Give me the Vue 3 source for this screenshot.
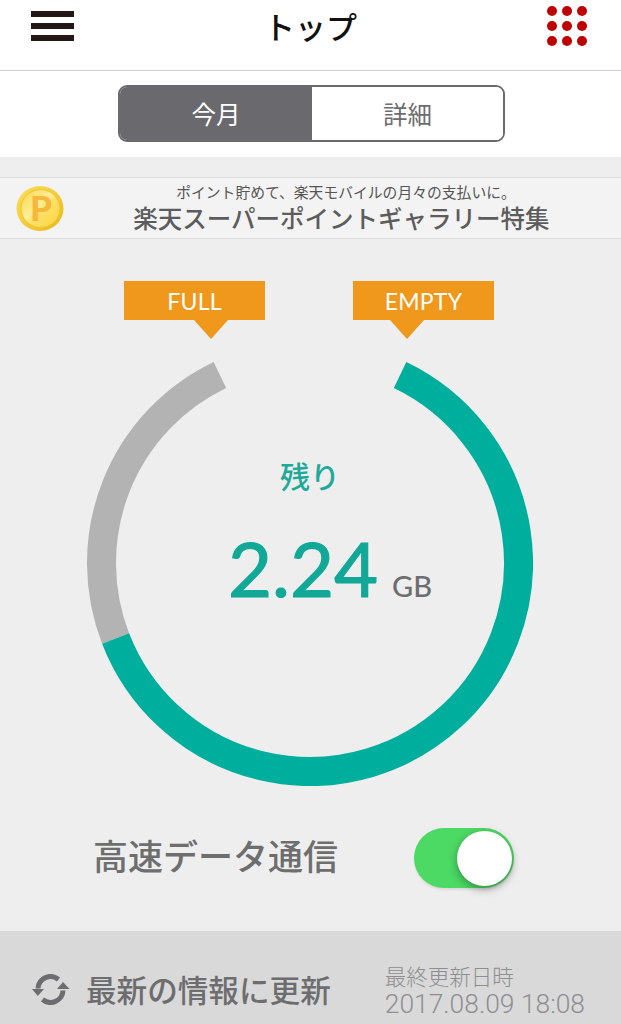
<template>
  <div class="page">
    <header class="top-bar">
      <button class="icon-btn" aria-label="menu">
        <span class="burger"></span>
        <span class="burger"></span>
        <span class="burger"></span>
      </button>
      <h1 class="title">トップ</h1>
      <div class="dots">
        <span v-for="n in 9" :key="n" class="dot"></span>
      </div>
    </header>

    <div class="tabs-row">
      <div class="tabs">
        <div class="tab active">今月</div>
        <div class="tab">詳細</div>
      </div>
    </div>

    <main class="content">
      <div class="banner">
        <svg class="coin" width="48" height="48" viewBox="0 0 48 48">
          <defs>
            <linearGradient id="coinEdge" x1="0" y1="0" x2="1" y2="1">
              <stop offset="0" stop-color="#fbe05a" />
              <stop offset="1" stop-color="#ecb61c" />
            </linearGradient>
            <linearGradient id="coinFace" x1="0" y1="0" x2="1" y2="1">
              <stop offset="0" stop-color="#fbd84a" />
              <stop offset="0.45" stop-color="#ffec96" />
              <stop offset="0.55" stop-color="#fde06a" />
              <stop offset="1" stop-color="#fbd63c" />
            </linearGradient>
          </defs>
          <ellipse cx="24" cy="23.5" rx="23.5" ry="22.5" fill="url(#coinEdge)" />
          <ellipse cx="24.5" cy="23.5" rx="19.5" ry="19" fill="url(#coinFace)" stroke="#f3c52e" />
          <text x="25" y="36" text-anchor="middle" class="coin-p">P</text>
        </svg>
        <div class="banner-text">
          <p class="banner-sub">ポイント貯めて、楽天モバイルの月々の支払いに。</p>
          <p class="banner-main">楽天スーパーポイントギャラリー特集</p>
        </div>
      </div>

      <div class="flags">
        <div class="flag flag-full">FULL</div>
        <div class="flag flag-empty">EMPTY</div>
      </div>

      <div class="gauge">
        <svg width="446" height="446" viewBox="0 0 446 446">
          <path :d="usedArc" class="arc arc-used" />
          <path :d="leftArc" class="arc arc-left" />
        </svg>
        <div class="gauge-center">
          <div class="remain-label">残り</div>
          <div class="remain-value">
            <span class="amount">2.24</span>
            <span class="unit">GB</span>
          </div>
        </div>
      </div>

      <div class="speed-row">
        <span class="speed-label">高速データ通信</span>
        <div class="switch">
          <span class="knob"></span>
        </div>
      </div>
    </main>

    <footer class="update-bar">
      <div class="refresh">
        <svg width="38" height="31" viewBox="0 0 38 31">
          <path d="M26.5 5.5A12.5 12.5 0 0 0 6 14.5" class="refresh-line" />
          <path d="M0 15h12L5.8 22z" class="refresh-head" />
          <path d="M31 16.5A12.5 12.5 0 0 1 10.5 25.5" class="refresh-line" />
          <path d="M25 15h12.5L31 8z" class="refresh-head" />
        </svg>
        <span class="refresh-label">最新の情報に更新</span>
      </div>
      <div class="last-update">
        <div class="last-label">最終更新日時</div>
        <div class="last-date">2017.08.09 18:08</div>
      </div>
    </footer>
  </div>
</template>

<script setup>
const CENTER = 223
const RADIUS = 208.5

function point(deg) {
  const rad = (deg * Math.PI) / 180
  return `${(CENTER + RADIUS * Math.sin(rad)).toFixed(2)} ${(CENTER - RADIUS * Math.cos(rad)).toFixed(2)}`
}

function arc(from, to) {
  const large = to - from > 180 ? 1 : 0
  return `M${point(from)}A${RADIUS} ${RADIUS} 0 ${large} 1 ${point(to)}`
}

// degrees clockwise from 12 o'clock
const leftArc = arc(25.6, 248.8)
const usedArc = arc(248.8, 334.4)
</script>

<style>
html,
body {
  margin: 0;
  background: #eee;
}
</style>

<style scoped>
.page {
  width: 621px;
  height: 1024px;
  overflow: hidden;
  display: flex;
  flex-direction: column;
  background: #eeeeee;
  font-family: "Noto Sans CJK JP", "Noto Sans", sans-serif;
  color: #6d6d6f;
}

.top-bar {
  height: 70px;
  box-sizing: border-box;
  flex: none;
  background: #fff;
  display: flex;
  align-items: flex-start;
  justify-content: space-between;
  padding: 6px 34px 0 31px;
  position: relative;
}

.top-bar::after {
  content: "";
  position: absolute;
  left: 0;
  right: 0;
  bottom: -1px;
  height: 1px;
  background: #cfcfcf;
}

.icon-btn {
  width: 43px;
  padding: 5px 0 0;
  border: 0;
  background: none;
  display: flex;
  flex-direction: column;
  gap: 6px;
}

.burger {
  display: block;
  height: 6px;
  background: #231815;
}

.title {
  margin: 0;
  font-size: 31px;
  line-height: 40px;
  font-weight: 500;
  color: #111;
}

.dots {
  display: grid;
  grid-template-columns: repeat(3, 10px);
  gap: 5px;
}

.dot {
  width: 10px;
  height: 10px;
  border-radius: 50%;
  background: #bf0000;
}

.tabs-row {
  flex: none;
  height: 87px;
  box-sizing: border-box;
  padding-top: 15px;
  background: #fff;
  display: flex;
  justify-content: center;
}

.tabs {
  width: 387px;
  height: 57px;
  box-sizing: border-box;
  display: flex;
  margin-left: 2px;
  border: 2px solid #6a6a6e;
  border-radius: 9px;
  overflow: hidden;
}

.tab {
  flex: 1;
  display: flex;
  align-items: center;
  justify-content: center;
  font-size: 24.5px;
  color: #6d6d6f;
  background: #fff;
}

.tab.active {
  flex: none;
  width: 192px;
  background: #6a6a6e;
  color: #fff;
}

.content {
  flex: 1;
  min-height: 0;
  padding-top: 20px;
  box-sizing: border-box;
}

.banner {
  height: 62px;
  box-sizing: border-box;
  position: relative;
  background: #f3f3f3;
  border-top: 1px solid #dcdcdc;
  border-bottom: 1px solid #dcdcdc;
  display: flex;
  justify-content: center;
}

.coin {
  position: absolute;
  left: 16px;
  top: 7px;
}

.coin-p {
  font-family: "Lato", sans-serif;
  font-weight: 900;
  font-size: 35px;
  fill: #f5b83a;
}

.banner-text {
  text-align: center;
  padding-left: 62px;
}

.banner-sub {
  margin: 4px 0 0 9px;
  font-size: 14.8px;
  line-height: 19px;
  color: #555;
  white-space: nowrap;
}

.banner-main {
  margin: 2px 0 0;
  font-size: 24.5px;
  line-height: 29px;
  font-weight: 500;
  color: #5c5c5c;
  white-space: nowrap;
}

.flags {
  display: flex;
  gap: 88px;
  padding: 42px 0 0 124px;
}

.flag {
  width: 141px;
  height: 39px;
  position: relative;
  background: #ef981b;
  color: #fff;
  font-family: "Lato", sans-serif;
  font-size: 23px;
  letter-spacing: 0.2px;
  line-height: 41px;
  text-align: center;
}

.flag::after {
  content: "";
  position: absolute;
  top: 39px;
  border-left: 17px solid transparent;
  border-right: 17px solid transparent;
  border-top: 19px solid #ef981b;
}

.flag-full::after {
  left: 70px;
}

.flag-empty::after {
  left: 37px;
}

.gauge {
  position: relative;
  width: 446px;
  height: 446px;
  margin: 20px 0 0 87px;
}

.gauge svg {
  display: block;
}

.arc {
  fill: none;
  stroke-width: 29;
}

.arc-left {
  stroke: #00ae9d;
}

.arc-used {
  stroke: #b3b3b3;
}

.gauge-center {
  position: absolute;
  left: 0;
  right: 0;
  top: 115px;
  display: flex;
  flex-direction: column;
  align-items: center;
}

.remain-label {
  font-size: 30px;
  line-height: 40px;
  font-weight: 500;
  color: #1fa99a;
}

.remain-value {
  margin-top: 28px;
  padding-left: 40px;
  display: flex;
  align-items: baseline;
  gap: 14px;
  font-family: "Lato", sans-serif;
}

.amount {
  font-size: 76px;
  line-height: 90px;
  font-weight: 400;
  -webkit-text-stroke: 1.2px #11a898;
  color: #11a898;
}

.unit {
  font-size: 29px;
  font-weight: 500;
  color: #6d6d6f;
}

.speed-row {
  display: flex;
  align-items: flex-start;
  padding: 39px 0 0 93px;
  gap: 76px;
}

.speed-label {
  font-size: 35px;
  line-height: 60px;
  font-weight: 500;
  color: #6e6e6e;
  white-space: nowrap;
}

.switch {
  width: 100px;
  height: 60px;
  margin-top: 3px;
  position: relative;
  border-radius: 30px;
  background: #4cd964;
  box-shadow: 0 2px 2px rgba(0, 0, 0, 0.08);
}

.knob {
  position: absolute;
  right: 2px;
  top: 3px;
  width: 55px;
  height: 55px;
  border-radius: 50%;
  background: #fff;
  box-shadow: 0 3px 8px rgba(0, 0, 0, 0.35);
}

.update-bar {
  flex: none;
  height: 93px;
  box-sizing: border-box;
  background: #d9d9d9;
  display: flex;
  align-items: flex-start;
  padding: 31px 0 0 32px;
}

.refresh {
  display: flex;
  align-items: center;
  gap: 16px;
  height: 54px;
}

.refresh-line {
  fill: none;
  stroke: #6d6d6f;
  stroke-width: 5;
}

.refresh-head {
  fill: #6d6d6f;
}

.refresh-label {
  font-size: 30.6px;
  font-weight: 500;
  color: #6d6d6f;
  white-space: nowrap;
}

.last-update {
  margin-left: 54px;
  color: #8e8e90;
  white-space: nowrap;
}

.last-label {
  font-size: 21.5px;
  line-height: 28px;
  font-weight: 300;
}

.last-date {
  font-family: "Roboto", sans-serif;
  font-weight: 300;
  font-size: 26.4px;
  line-height: 28px;
}
</style>
